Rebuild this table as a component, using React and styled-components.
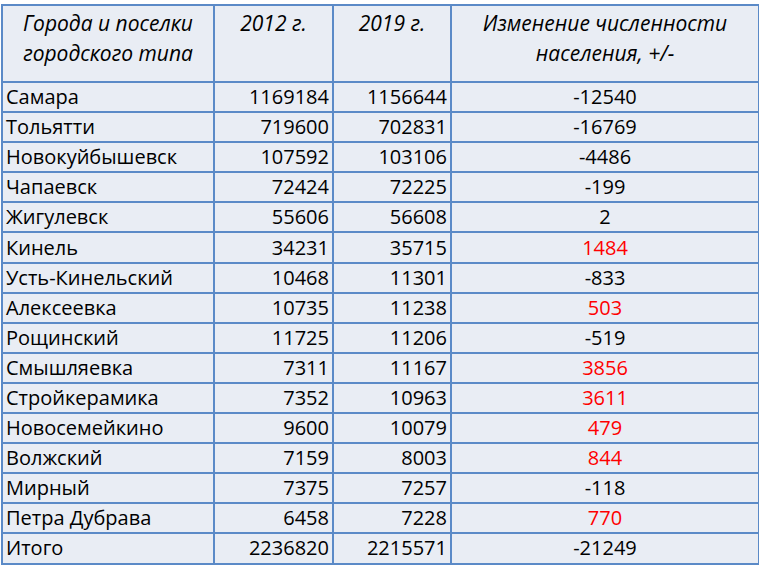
import React from "react";
import styled, { createGlobalStyle } from "styled-components";

const Global = createGlobalStyle`
  html, body { margin: 0; padding: 0; background: #ffffff; }
  body { font-family: "Open Sans", "Liberation Sans", sans-serif; }
`;

const Page = styled.div`
  padding: 4px 0 0 1px;
`;

const Table = styled.table`
  border-collapse: collapse;
  table-layout: fixed;
  width: 757px;
  background: #e9edf4;
  font-family: "Open Sans", "Liberation Sans", sans-serif;
  font-size: 20px;
  color: #000;
  border: 2px solid #5b8ac7;
`;

const HeadCell = styled.th`
  border: 2px solid #5b8ac7;
  height: 73px;
  padding: 2px 2px 0;
  vertical-align: top;
  font-weight: 400;
  font-style: italic;
  font-size: 21px;
  line-height: 30px;
  text-align: center;
  white-space: nowrap;
`;

const Row = styled.tr`
  height: 30.1px;
`;

const Cell = styled.td`
  border: 2px solid #5b8ac7;
  padding: 0 3px;
  line-height: 26px;
  text-align: ${(p) => p.$align || "left"};
  color: ${(p) => (p.$red ? "#ff0000" : "#000")};
  white-space: nowrap;
`;

const rows = [
  ["Самара", 1169184, 1156644, "-12540", false],
  ["Тольятти", 719600, 702831, "-16769", false],
  ["Новокуйбышевск", 107592, 103106, "-4486", false],
  ["Чапаевск", 72424, 72225, "-199", false],
  ["Жигулевск", 55606, 56608, "2", false],
  ["Кинель", 34231, 35715, "1484", true],
  ["Усть-Кинельский", 10468, 11301, "-833", false],
  ["Алексеевка", 10735, 11238, "503", true],
  ["Рощинский", 11725, 11206, "-519", false],
  ["Смышляевка", 7311, 11167, "3856", true],
  ["Стройкерамика", 7352, 10963, "3611", true],
  ["Новосемейкино", 9600, 10079, "479", true],
  ["Волжский", 7159, 8003, "844", true],
  ["Мирный", 7375, 7257, "-118", false],
  ["Петра Дубрава", 6458, 7228, "770", true],
  ["Итого", 2236820, 2215571, "-21249", false],
];

export default function App() {
  return (
    <>
      <Global />
      <Page>
        <Table>
          <colgroup>
            <col style={{ width: 212 }} />
            <col style={{ width: 119 }} />
            <col style={{ width: 118 }} />
            <col style={{ width: 308 }} />
          </colgroup>
          <thead>
            <tr>
              <HeadCell>
                Города и поселки
                <br />
                городского типа
              </HeadCell>
              <HeadCell>2012 г.</HeadCell>
              <HeadCell>2019 г.</HeadCell>
              <HeadCell>
                Изменение численности
                <br />
                населения, +/-
              </HeadCell>
            </tr>
          </thead>
          <tbody>
            {rows.map(([name, a, b, d, red]) => (
              <Row key={name}>
                <Cell>{name}</Cell>
                <Cell $align="right">{a}</Cell>
                <Cell $align="right">{b}</Cell>
                <Cell $align="center" $red={red}>
                  {d}
                </Cell>
              </Row>
            ))}
          </tbody>
        </Table>
      </Page>
    </>
  );
}
